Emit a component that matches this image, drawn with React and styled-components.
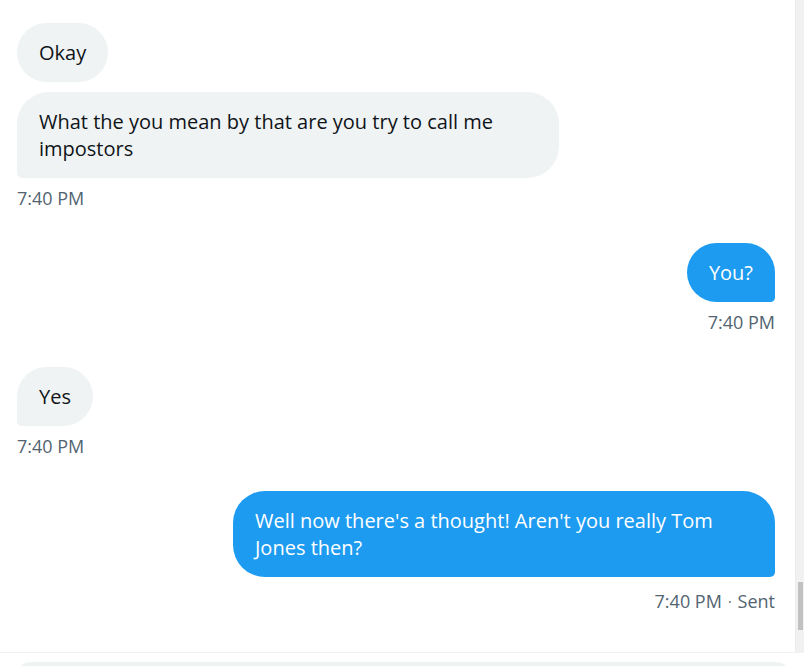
import React from "react";
import styled, { createGlobalStyle } from "styled-components";

const GlobalStyle = createGlobalStyle`
  html, body {
    margin: 0;
    padding: 0;
    background: #ffffff;
  }
  body {
    font-family: "Open Sans", "Noto Sans", "Liberation Sans", sans-serif;
    color: #0f1419;
  }
`;

const Page = styled.div`
  width: 804px;
  height: 666px;
  display: flex;
  flex-direction: column;
  overflow: hidden;
`;

const Main = styled.div`
  height: 652px;
  flex-shrink: 0;
  display: flex;
`;

const Conversation = styled.div`
  flex: 1;
  display: flex;
  flex-direction: column;
  padding: 23px 20px 0 17px;
`;

const Group = styled.div`
  display: flex;
  flex-direction: column;
  align-items: ${({ $mine }) => ($mine ? "flex-end" : "flex-start")};
  gap: 10px;
  padding-bottom: 34px;
`;

const Bubble = styled.div`
  max-width: 498px;
  padding: 16px 22px;
  font-size: 20px;
  line-height: 27px;
  border-radius: 32px;
  background: ${({ $mine }) => ($mine ? "#1d9bf0" : "#eff3f4")};
  color: ${({ $mine }) => ($mine ? "#ffffff" : "#0f1419")};
  ${({ $tail, $mine }) =>
    $tail &&
    ($mine ? "border-bottom-right-radius: 5px;" : "border-bottom-left-radius: 5px;")}
`;

const Meta = styled.div`
  margin-top: ${({ $extra }) => ($extra ? "4px" : "0")};
  font-size: 18px;
  line-height: 21px;
  color: #536471;
  display: flex;
  align-items: center;
  gap: 6px;
`;

const Dot = styled.span`
  font-size: 14px;
`;

const Scrollbar = styled.div`
  width: 8px;
  background: #f1f1f1;
  border-left: 1px solid #ececec;
  display: flex;
  flex-direction: column;
  justify-content: flex-end;
  padding-bottom: 22px;
  align-items: center;
`;

const Thumb = styled.div`
  width: 5px;
  height: 48px;
  background: #c1c1c1;
`;

const Footer = styled.div`
  flex: 1;
  border-top: 1px solid #eff3f4;
  padding: 9px 12px 0 15px;
`;

const Composer = styled.div`
  height: 40px;
  background: #eff3f4;
  border-radius: 16px;
`;

const groups = [
  {
    mine: false,
    messages: ["Okay", "What the you mean by that are you try to call me impostors"],
    time: "7:40 PM",
  },
  { mine: true, messages: ["You?"], time: "7:40 PM" },
  { mine: false, messages: ["Yes"], time: "7:40 PM" },
  {
    mine: true,
    messages: ["Well now there's a thought! Aren't you really Tom Jones then?"],
    time: "7:40 PM",
    status: "Sent",
  },
];

export default function App() {
  return (
    <Page>
      <GlobalStyle />
      <Main>
        <Conversation>
          {groups.map((g, i) => (
            <Group key={i} $mine={g.mine}>
              {g.messages.map((m, j) => (
                <Bubble
                  key={j}
                  $mine={g.mine}
                  $tail={j === g.messages.length - 1}
                >
                  {m}
                </Bubble>
              ))}
              <Meta $extra={!!g.status}>
                {g.time}
                {g.status && (
                  <>
                    <Dot>·</Dot>
                    {g.status}
                  </>
                )}
              </Meta>
            </Group>
          ))}
        </Conversation>
        <Scrollbar>
          <Thumb />
        </Scrollbar>
      </Main>
      <Footer>
        <Composer />
      </Footer>
    </Page>
  );
}
